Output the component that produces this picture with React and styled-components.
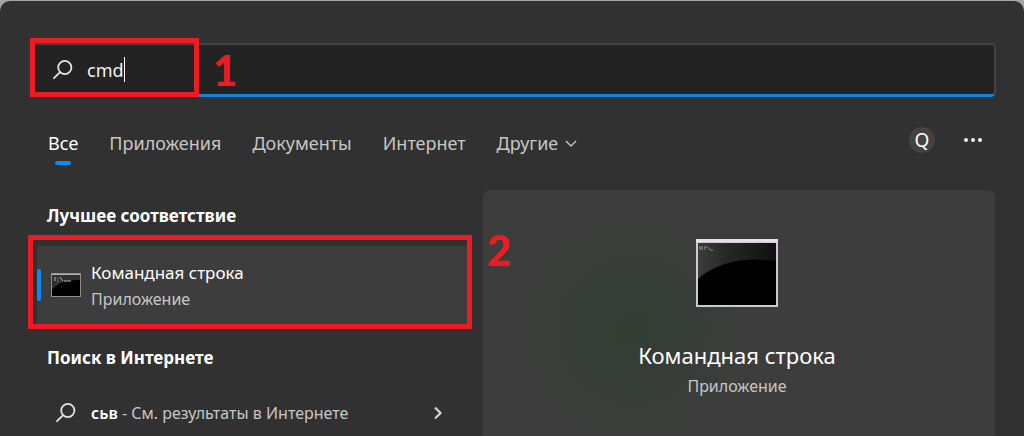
import React from 'react'
import styled, { createGlobalStyle } from 'styled-components'

export default function App() {
    return (
        <>
            <GlobalStyle />
            <Window>
                <SearchArea>
                    <SearchBox>
                        <SearchIcon $size={20} />
                        <SearchInput type="text" aria-label="Поиск" defaultValue="cmd" size={3} />
                        <Caret />
                    </SearchBox>
                    <SearchMark />
                    <SearchNumber>1</SearchNumber>
                </SearchArea>

                <Toolbar>
                    <Tabs>
                        <Tab $active>Все</Tab>
                        <Tab>Приложения</Tab>
                        <Tab>Документы</Tab>
                        <Tab>Интернет</Tab>
                        <Tab>
                            Другие
                            <ChevronDown />
                        </Tab>
                    </Tabs>
                    <Actions>
                        <Avatar>Q</Avatar>
                        <MoreButton aria-label="Параметры">
                            <Dots />
                        </MoreButton>
                    </Actions>
                </Toolbar>

                <Content>
                    <Results>
                        <Heading>Лучшее соответствие</Heading>
                        <BestMatch>
                            <BestButton>
                                <Accent />
                                <SmallConsole />
                                <Texts>
                                    <AppName>Командная строка</AppName>
                                    <AppType>Приложение</AppType>
                                </Texts>
                            </BestButton>
                            <MatchMark />
                            <MatchNumber>2</MatchNumber>
                        </BestMatch>
                        <Heading>Поиск в Интернете</Heading>
                        <WebResult>
                            <SearchIcon $size={20} />
                            <WebText>
                                <b>сьв</b> - См. результаты в Интернете
                            </WebText>
                            <ChevronRight />
                        </WebResult>
                    </Results>
                    <Preview>
                        <LargeConsole />
                        <PreviewName>Командная строка</PreviewName>
                        <AppType>Приложение</AppType>
                    </Preview>
                </Content>
            </Window>
        </>
    )
}

function SearchIcon({ $size }) {
    return (
        <Icon width={$size} height={$size} viewBox="0 0 20 20" fill="none" stroke="#e4e4e4" strokeWidth="1.8">
            <circle cx="11.8" cy="7.5" r="6.6" />
            <path d="M7.1 12.2L1 18.2" strokeLinecap="round" />
        </Icon>
    )
}

function ChevronDown() {
    return (
        <Icon width="12" height="12" viewBox="0 0 12 12" fill="none" stroke="#c6c6c6" strokeWidth="1.4">
            <path d="M1 4L6 9L11 4" />
        </Icon>
    )
}

function ChevronRight() {
    return (
        <Icon width="10" height="14" viewBox="0 0 10 14" fill="none" stroke="#d2d2d2" strokeWidth="2.2">
            <path d="M2 1.5L7.5 7L2 12.5" />
        </Icon>
    )
}

function Dots() {
    return (
        <Icon width="20" height="6" viewBox="0 0 20 6" fill="#f4f4f4">
            <circle cx="3" cy="3" r="2" />
            <circle cx="10" cy="3" r="2" />
            <circle cx="17" cy="3" r="2" />
        </Icon>
    )
}

function SmallConsole() {
    return (
        <Icon width="30" height="24" viewBox="0 0 30 24">
            <rect x="0.5" y="0.5" width="29" height="23" fill="#000" stroke="#8d8d8d" />
            <path d="M1 1H29V7C18 7 7 9 1 17Z" fill="#303030" />
            <path d="M1 1.5H29" stroke="#b4b4b4" />
            <path d="M4 4V8M7 5V6M7 7.5V8.5M9 4L12 8M13 8H20" stroke="#b0b0b0" fill="none" />
        </Icon>
    )
}

function LargeConsole() {
    return (
        <Icon width="82" height="68" viewBox="0 0 82 68">
            <defs>
                <linearGradient id="shine" x1="0" y1="0" x2="1" y2="0">
                    <stop offset="0" stopColor="#3c3c3c" />
                    <stop offset="0.4" stopColor="#262626" />
                    <stop offset="1" stopColor="#101010" />
                </linearGradient>
            </defs>
            <rect width="82" height="68" fill="#cfc9d2" />
            <rect width="82" height="3" fill="#e6dfe9" />
            <rect x="2" y="4" width="78" height="62" fill="#000" />
            <path d="M2 4H80V22C52 18 22 22 2 40Z" fill="url(#shine)" />
            <path d="M4 7V11M6 7V11M4 9H6M8 8H11M9 8V11M12 8L14 11M14 11H17" stroke="#9a9a9a" strokeWidth="0.8" fill="none" />
        </Icon>
    )
}

const GlobalStyle = createGlobalStyle`
    body {
        margin: 0;
        background: #a3a7a3;
        font-family: "Noto Sans", "Open Sans", sans-serif;
        color: #fff;
    }
    * {
        box-sizing: border-box;
    }
    button {
        border: none;
        padding: 0;
        background: none;
        color: inherit;
        font-family: inherit;
        text-align: left;
    }
`

const Window = styled.main`
    display: flex;
    flex-direction: column;
    min-height: calc(100vh - 1px);
    margin-top: 1px;
    padding: 42px 28px 0 31px;
    border-radius: 10px 10px 0 0;
    background: #313131;
`

const Icon = styled.svg`
    flex: none;
    display: block;
`

const SearchArea = styled.div`
    position: relative;
`

const SearchBox = styled.div`
    display: flex;
    align-items: center;
    height: 54px;
    padding-left: 20px;
    border: 2px solid #434343;
    border-bottom: 3px solid #1683d8;
    border-radius: 5px;
    background: #232323;
`

const SearchInput = styled.input`
    field-sizing: content;
    margin-left: 14px;
    padding: 0;
    border: none;
    outline: none;
    background: none;
    color: #f4f4f4;
    font-family: inherit;
    font-size: 18px;
    line-height: 24px;
`

const Caret = styled.span`
    width: 1px;
    height: 25px;
    background: #fff;
`

const Mark = styled.div`
    position: absolute;
    border: 5px solid #ed1c24;
    pointer-events: none;
`

const SearchMark = styled(Mark)`
    left: -1px;
    top: -5px;
    width: 169px;
    height: 59px;
`

const MatchMark = styled(Mark)`
    inset: -11px -5px -5px -9px;
`

const Number = styled.span`
    position: absolute;
    color: #ed1c24;
    font-family: Lato, sans-serif;
    font-size: 42px;
    font-weight: 900;
    line-height: 42px;
`

const SearchNumber = styled(Number)`
    left: 182px;
    top: 6px;
`

const MatchNumber = styled(Number)`
    right: -44px;
    top: -17px;
`

const Toolbar = styled.div`
    display: flex;
    justify-content: space-between;
    padding: 22px 13px 0 17px;
`

const Tabs = styled.nav`
    display: flex;
    gap: 31px;
`

const Tab = styled.button`
    display: flex;
    align-items: center;
    gap: 7px;
    position: relative;
    height: 48px;
    font-size: 18px;
    color: ${props => props.$active ? '#fff' : '#c6c6c6'};

    &::after {
        content: '';
        display: ${props => props.$active ? 'block' : 'none'};
        position: absolute;
        left: calc(50% - 8px);
        bottom: 2px;
        width: 16px;
        height: 4px;
        border-radius: 2px;
        background: #0c8cf0;
    }
`

const Actions = styled.div`
    display: flex;
    align-items: center;
    gap: 28px;
    height: 42px;
`

const Avatar = styled.button`
    width: 26px;
    height: 26px;
    border-radius: 50%;
    background: #434343;
    font-size: 19px;
    line-height: 26px;
    text-align: center;
`

const MoreButton = styled.button`
    padding: 8px 0;
`

const Content = styled.div`
    display: grid;
    grid-template-columns: minmax(0, 436fr) minmax(0, 512fr);
    gap: 16px;
    flex: 1;
    padding: 23px 1px 0 0;
`

const Results = styled.section`
    padding: 12px 0 0 6px;
`

const Heading = styled.h2`
    margin: 0;
    padding-left: 10px;
    font-size: 17px;
    font-weight: 700;
    line-height: 28px;
`

const BestMatch = styled.div`
    position: relative;
    margin: 16px 0 20px;
`

const BestButton = styled.button`
    display: flex;
    align-items: center;
    width: 100%;
    height: 78px;
    background: #3d3d3d;
`

const Accent = styled.span`
    width: 4px;
    height: 32px;
    margin-right: 10px;
    border-radius: 2px;
    background: #0c8cf0;
`

const Texts = styled.span`
    display: flex;
    flex-direction: column;
    margin-left: 10px;
`

const AppName = styled.span`
    font-size: 17px;
    line-height: 28px;
`

const AppType = styled.span`
    font-size: 16px;
    line-height: 24px;
    color: #c6c6c6;
`

const WebResult = styled.button`
    display: flex;
    align-items: center;
    width: 100%;
    height: 48px;
    margin-top: 17px;
    padding: 0 24px 0 19px;
`

const WebText = styled.span`
    flex: 1;
    margin-left: 15px;
    font-size: 16px;
    color: #c6c6c6;

    b {
        font-weight: 600;
        color: #fff;
    }
`

const Preview = styled.section`
    display: flex;
    flex-direction: column;
    align-items: center;
    padding: 49px 4px 0 0;
    border-radius: 8px 8px 0 0;
    background: radial-gradient(ellipse 120px 120px at 150px 140px, #333d34, #3d3d3d);
`

const PreviewName = styled.h1`
    margin: 32px 0 3px;
    font-size: 22px;
    font-weight: 400;
    line-height: 32px;
`
